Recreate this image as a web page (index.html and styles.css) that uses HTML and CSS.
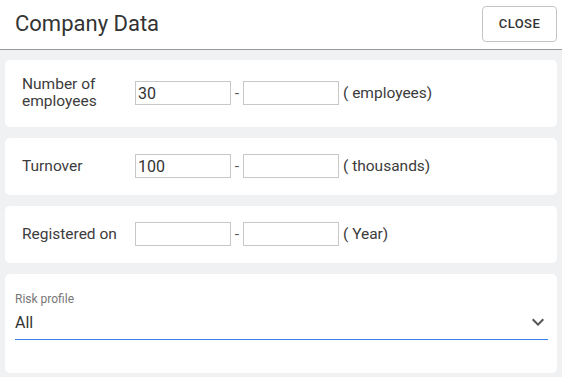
FILE: index.html
```html
<!DOCTYPE html>
<html lang="en">
<head>
    <meta charset="UTF-8">
    <meta name="viewport" content="width=device-width,initial-scale=1">
    <title>Company Data</title>
    <link rel="stylesheet" href="styles.css">
</head>
<body>
<header class="header">
    <h1>Company Data</h1>
    <button class="close-btn">CLOSE</button>
</header>
<main>
    <div class="card">
        <label class="row-label">Number of employees</label>
        <input class="range-input" type="text" value="30">
        <span class="dash">-</span>
        <input class="range-input" type="text">
        <span class="unit">( employees)</span>
    </div>
    <div class="card">
        <label class="row-label">Turnover</label>
        <input class="range-input" type="text" value="100">
        <span class="dash">-</span>
        <input class="range-input" type="text">
        <span class="unit">( thousands)</span>
    </div>
    <div class="card">
        <label class="row-label">Registered on</label>
        <input class="range-input" type="text">
        <span class="dash">-</span>
        <input class="range-input" type="text">
        <span class="unit">( Year)</span>
    </div>
    <div class="card select-card">
        <div class="select-label">Risk profile</div>
        <div class="select-field">
            <span>All</span>
            <svg class="chevron" width="24" height="24" viewBox="0 0 24 24">
                <path d="M16.59 8.59L12 13.17 7.41 8.59 6 10l6 6 6-6z" fill="#555"/>
            </svg>
        </div>
    </div>
</main>
</body>
</html>
```

FILE: styles.css
```css
* {
    margin: 0;
    padding: 0;
    box-sizing: border-box;
}

body {
    font-family: Roboto, "Liberation Sans", sans-serif;
    color: #3c3c3c;
    background: #f0f1f3;
}

.header {
    display: flex;
    align-items: center;
    justify-content: space-between;
    height: 50px;
    padding: 0 5px 2px 15px;
    background: #fff;
    border-bottom: 1px solid #999;
}

.header h1 {
    font-size: 22px;
    font-weight: 400;
    color: #333;
}

.close-btn {
    width: 75px;
    height: 36px;
    background: #fff;
    border: 1px solid #c4c4c4;
    border-radius: 4px;
    font-family: Roboto, "Liberation Sans", sans-serif;
    font-size: 13px;
    font-weight: 500;
    color: #333;
    letter-spacing: 0.4px;
}

main {
    display: flex;
    flex-direction: column;
    gap: 11px;
    padding: 10px 5px 5px;
}

.card {
    display: flex;
    align-items: center;
    min-height: 57px;
    padding: 16px 17px;
    background: #fff;
    border-radius: 5px;
    font-size: 15.5px;
    line-height: 17.4px;
}

.row-label {
    width: 113px;
    padding-right: 12px;
}

.range-input {
    width: 96px;
    height: 24px;
    border: 1px solid #c8c8c8;
    padding: 0 2px;
    font-family: Roboto, "Liberation Sans", sans-serif;
    font-size: 16px;
    color: #333;
    outline: none;
}

.dash {
    width: 12px;
    text-align: center;
    color: #555;
}

.unit {
    margin-left: 4px;
}

.select-card {
    display: block;
    height: 99px;
    padding: 18px 9px 0 10px;
}

.select-label {
    font-size: 12px;
    line-height: 14px;
    color: #777;
}

.select-field {
    display: flex;
    align-items: center;
    justify-content: space-between;
    height: 34px;
    border-bottom: 1px solid #3a80e8;
    font-size: 16px;
    color: #333;
}

.chevron {
    margin-right: -2px;
}
```
